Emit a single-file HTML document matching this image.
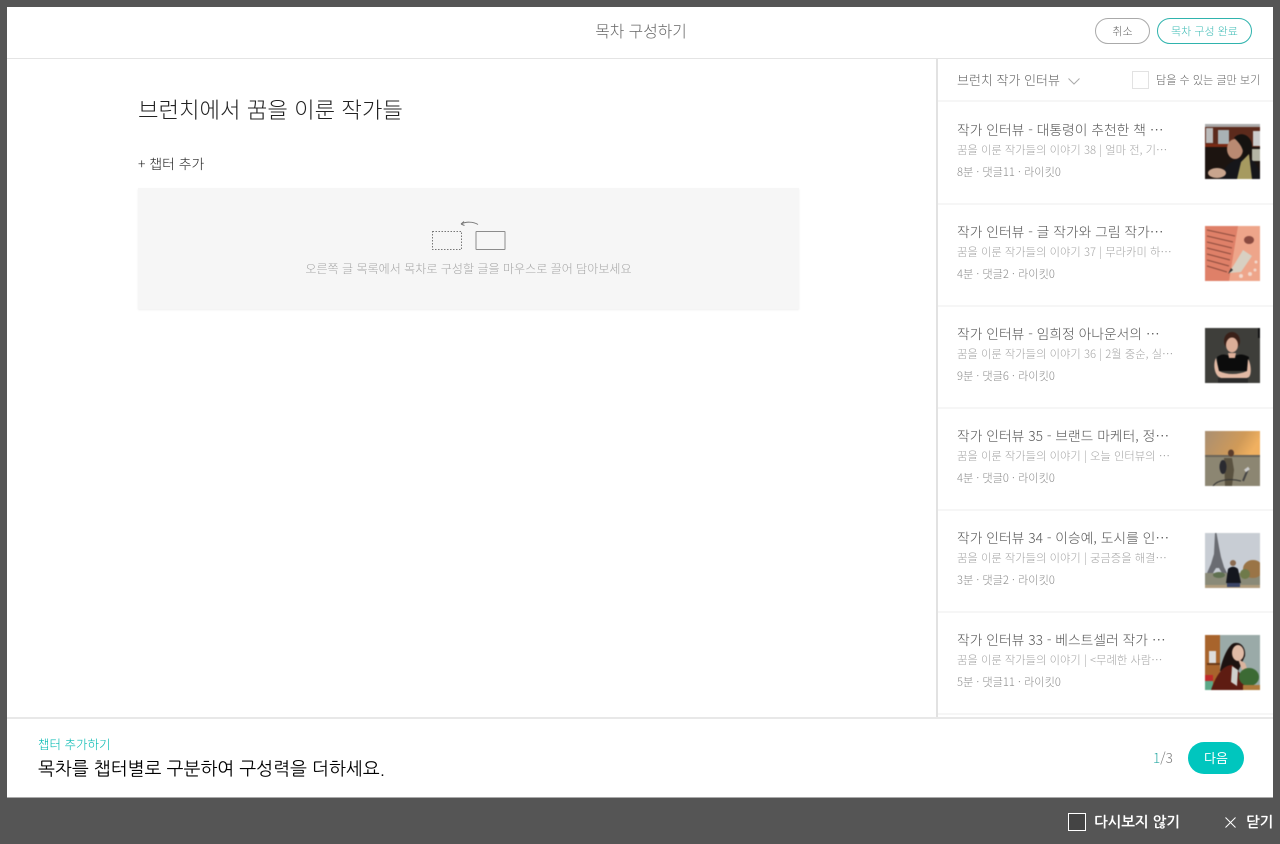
<!DOCTYPE html>
<html lang="ko"><head><meta charset="utf-8"><title>목차 구성하기</title>
<style>
html,body{margin:0;padding:0;width:1280px;height:844px;overflow:hidden;background:#555}
body{font-family:"Noto Sans CJK KR","Liberation Sans",sans-serif;font-weight:300;position:relative}
.a{position:absolute;white-space:nowrap;line-height:1}
#m{position:absolute;left:7px;top:7px;width:1266px;height:790px;background:#fff}
.t{left:957px;width:216px;overflow:hidden;font-size:13.8px;color:#555;line-height:20px}
.s{left:957px;width:216px;overflow:hidden;font-size:11.3px;color:#a5a5a5;line-height:16px}
.c{left:957px;font-size:11.2px;color:#8c8c8c;line-height:16px}
.l{left:938px;width:335px;height:2px;background:#f6f6f6}
svg.p{position:absolute;left:1205px;width:55px;height:55px;filter:blur(.6px)}
</style></head><body>
<div id="m"></div>
<div class="a" style="left:7px;top:58px;width:1266px;height:1px;background:#e4e4e4"></div>
<div class="a" style="left:936px;top:59px;width:2px;height:658px;background:#e2e2e2"></div>
<div class="a" style="left:7px;top:717px;width:1266px;height:2px;background:#e8e8e8"></div>
<div class="a" style="left:7px;top:797px;width:1266px;height:1px;background:#aaa"></div>

<div class="a" style="left:441px;width:400px;top:21px;text-align:center;font-size:15.8px;line-height:20px;color:#666">목차 구성하기</div>
<div class="a" style="left:1095px;top:18px;width:53px;height:24px;border:1px solid #aaa;border-radius:13px;text-align:center;font-size:11px;line-height:24px;color:#666">취소</div>
<div class="a" style="left:1157px;top:18px;width:93px;height:24px;border:1px solid #2fb3ad;border-radius:13px;text-align:center;font-size:11px;line-height:24px;color:#3fbcb6">목차 구성 완료</div>

<div class="a" style="left:138px;top:94px;font-size:22.3px;line-height:30px;color:#222">브런치에서 꿈을 이룬 작가들</div>
<div class="a" style="left:138px;top:154px;font-size:13.9px;line-height:20px;color:#222">+ 챕터 추가</div>
<div class="a" style="left:138px;top:188px;width:661px;height:121px;background:#f6f6f6;box-shadow:0 1px 2px rgba(0,0,0,.07)"></div>
<svg class="a" style="left:428px;top:216px" width="82" height="38" viewBox="0 0 82 38" fill="none">
<rect x="4.500" y="15.500" width="29" height="18" stroke="#777" stroke-dasharray="1.500 1.500"/>
<rect x="48" y="15.500" width="29" height="18" stroke="#8c8c8c" rx=".5"/>
<path d="M50 8.500C45 5.500 38 5.500 33 8M33 8l3-2.500M33 8l3.500 1.500" stroke="#777"/>
</svg>
<div class="a" style="left:138px;top:260px;width:661px;text-align:center;font-size:12.05px;line-height:18px;color:#a5a5a5">오른쪽 글 목록에서 목차로 구성할 글을 마우스로 끌어 담아보세요</div>

<div class="a" style="left:957px;top:71px;font-size:13px;line-height:18px;color:#666">브런치 작가 인터뷰</div>
<svg class="a" style="left:1067px;top:76px" width="14" height="10" fill="none"><path d="M1.500 2.500l5.500 5.500 5.500-5.500" stroke="#aaa"/></svg>
<div class="a" style="left:1132px;top:71px;width:15px;height:16px;border:1px solid #e2e2e2;background:#fff"></div>
<div class="a" style="left:1156px;top:71px;font-size:11.1px;line-height:18px;color:#666">담을 수 있는 글만 보기</div>
<div class="a l" style="top:100px"></div>

<div class="a t" style="top:119px">작가 인터뷰 - 대통령이 추천한 책 …</div>
<div class="a s" style="top:142px">꿈을 이룬 작가들의 이야기 38 | 얼마 전, 기…</div>
<div class="a c" style="top:164px">8분 · 댓글11 · 라이킷0</div>
<svg class="a p" style="top:124px" viewBox="0 0 55 55"><rect width="55" height="55" fill="#1c1410"/><rect width="55" height="3" fill="#aaa"/><rect x="0" y="3" width="55" height="20" fill="#5c2a1c"/><rect x="1" y="4" width="7" height="15" fill="#bbb"/><rect x="13" y="6" width="11" height="14" fill="#a9b2b5"/><rect x="48" y="7" width="7" height="15" fill="#ccc"/><rect x="0" y="20" width="30" height="3" fill="#7a2a14"/><rect x="47" y="25" width="8" height="12" fill="#b5b5a5"/><path d="M15 55C18 42 28 35 38 34S55 42 55 55z" fill="#16161a"/><ellipse cx="30" cy="25" rx="8" ry="10" fill="#b98a72"/><path d="M29 14C36 6 47 12 47 22S42 34 38 36C40 27 36 20 29 14z" fill="#151210"/><path d="M32 55L36 38 44 30 47 55z" fill="#a69a60"/><ellipse cx="12" cy="49" rx="9" ry="5" fill="#c9a58e"/></svg>
<div class="a l" style="top:203px"></div>

<div class="a t" style="top:221px">작가 인터뷰 - 글 작가와 그림 작가…</div>
<div class="a s" style="top:244px">꿈을 이룬 작가들의 이야기 37 | 무라카미 하…</div>
<div class="a c" style="top:266px">4분 · 댓글2 · 라이킷0</div>
<svg class="a p" style="top:226px" viewBox="0 0 55 55"><rect width="55" height="55" fill="#eea58a"/><path d="M0 0H33L24 55H0z" fill="#df8068"/><g stroke="#8a4a3c" stroke-width="1"><path d="M2 4L30 10M2 10L28 16M2 16L27 22M2 22L26 28M2 28L25 34M2 34L24 40M2 40L22 46"/></g><path d="M24 47L38 24 47 30 36 46z" fill="#d8d0c2"/><path d="M23 48l3-6 2 2z" fill="#333"/><ellipse cx="44" cy="14" rx="5" ry="4" fill="#8a4a40"/><g fill="#f2d8cc"><circle cx="36" cy="50" r="2"/><circle cx="45" cy="48" r="2"/><circle cx="51" cy="36" r="1.500"/><circle cx="50" cy="44" r="1.500"/></g></svg>
<div class="a l" style="top:305px"></div>

<div class="a t" style="top:323px">작가 인터뷰 - 임희정 아나운서의 …</div>
<div class="a s" style="top:346px">꿈을 이룬 작가들의 이야기 36 | 2월 중순, 실…</div>
<div class="a c" style="top:368px">9분 · 댓글6 · 라이킷0</div>
<svg class="a p" style="top:328px" viewBox="0 0 55 55"><rect width="55" height="55" fill="#3e3e3a"/><rect x="53" width="2" height="10" fill="#111"/><ellipse cx="27" cy="13" rx="8" ry="9" fill="#3a2018"/><ellipse cx="27" cy="17" rx="6" ry="7.500" fill="#dcae98"/><path d="M12 29C17 25 22 26 27 30 32 26 37 25 44 29L43 43H13z" fill="#0c0c0c"/><path d="M23 25h8l-1 5h-6z" fill="#dcae98"/><path d="M11 30c-3 5-2 16 3 19 8 4 22 4 30 0 3-3 2-14-1-18l-1 12c-9 4-20 4-28 0z" fill="#e2b9a4"/><rect x="13" y="50" width="30" height="5" fill="#2a2a2a"/></svg>
<div class="a l" style="top:407px"></div>

<div class="a t" style="top:425px">작가 인터뷰 35 - 브랜드 마케터, 정…</div>
<div class="a s" style="top:448px">꿈을 이룬 작가들의 이야기 | 오늘 인터뷰의 …</div>
<div class="a c" style="top:470px">4분 · 댓글0 · 라이킷0</div>
<svg class="a p" style="top:431px" viewBox="0 0 55 55"><defs><linearGradient id="g1" x1="0" x2="1" y1="0" y2=".3"><stop offset="0" stop-color="#a98f72"/><stop offset=".7" stop-color="#d09a58"/><stop offset="1" stop-color="#f0b060"/></linearGradient></defs><rect width="55" height="26" fill="url(#g1)"/><rect y="25" width="55" height="30" fill="#8c8672"/><rect y="24" width="55" height="2" fill="#6a6458"/><ellipse cx="26" cy="22" rx="3" ry="3.500" fill="#5a3c2c"/><path d="M19 27h8l2 12-2 16h-7z" fill="#5a5240"/><ellipse cx="18" cy="36" rx="3.500" ry="7" fill="#2a2a30"/><path d="M8 55C12 49 25 47 36 50" stroke="#333" fill="none"/><path d="M38 50L43 38" stroke="#444" stroke-width="2"/><path d="M40 40l4-3" stroke="#ccc" stroke-width="3"/></svg>
<div class="a l" style="top:509px"></div>

<div class="a t" style="top:527px">작가 인터뷰 34 - 이승예, 도시를 인…</div>
<div class="a s" style="top:550px">꿈을 이룬 작가들의 이야기 | 궁금증을 해결…</div>
<div class="a c" style="top:572px">3분 · 댓글2 · 라이킷0</div>
<svg class="a p" style="top:533px" viewBox="0 0 55 55"><rect width="55" height="55" fill="#c8cdd4"/><path d="M10 0h1.500L14 14l2 10 3 10 3 6h-5l-3-5h-3l-3 5H2l4-9 3-10z" fill="#6a6c72"/><rect x="0" y="40" width="55" height="13" fill="#8a8a78"/><rect x="0" y="52" width="55" height="3" fill="#b09c7c"/><ellipse cx="48" cy="36" rx="10" ry="9" fill="#9a7446"/><ellipse cx="40" cy="41" rx="5" ry="5" fill="#6f7a4a"/><ellipse cx="14" cy="42" rx="6" ry="3" fill="#5f7050"/><circle cx="28" cy="30" r="3" fill="#8a6a50"/><path d="M21 50L23 36c3-3 7-3 10 0l3 14z" fill="#14161e"/><path d="M22 50h13v4H22z" fill="#3a4466"/></svg>
<div class="a l" style="top:611px"></div>

<div class="a t" style="top:629px">작가 인터뷰 33 - 베스트셀러 작가 …</div>
<div class="a s" style="top:652px">꿈을 이룬 작가들의 이야기 | &lt;무례한 사람…</div>
<div class="a c" style="top:674px">5분 · 댓글11 · 라이킷0</div>
<svg class="a p" style="top:635px" viewBox="0 0 55 55"><rect width="55" height="55" fill="#9aaaa8"/><rect width="15" height="55" fill="#a8642c"/><rect x="4" y="16" width="7" height="12" fill="#ddd"/><rect x="2" y="28" width="13" height="2" fill="#6a3a18"/><rect x="0" y="40" width="8" height="15" fill="#5ca888"/><rect x="0" y="40" width="8" height="6" fill="#c02a2a"/><path d="M15 36C17 24 24 8 30 8c7-1 11 6 10 13l-9 20z" fill="#1c1210"/><ellipse cx="33" cy="18" rx="6" ry="8" fill="#e0bba6"/><path d="M6 55C12 38 19 30 27 30c5 4 8 8 10 12 4-2 6 4 10 9v4z" fill="#5e1c12"/><path d="M27 31l6 4-1 16-6-4z" fill="#d0d0cc"/><path d="M33 24l7 4 3 8-6-1z" fill="#dbb49e"/><ellipse cx="44" cy="42" rx="10" ry="9" fill="#3c6a34"/><rect x="38" y="50" width="17" height="5" fill="#b07a3c"/></svg>
<div class="a l" style="top:713px"></div>

<div class="a" style="left:38px;top:736px;font-size:12.5px;line-height:16px;color:#00b8b0">챕터 추가하기</div>
<div class="a" style="left:38px;top:758px;font-family:'NanumGothic','Noto Sans CJK KR',sans-serif;font-weight:400;font-size:18px;line-height:22px;color:#000">목차를 챕터별로 구분하여 구성력을 더하세요.</div>
<div class="a" style="left:1153px;top:749px;font-size:13.5px;line-height:16px;color:#2aa9a5">1<span style="color:#777">/3</span></div>
<div class="a" style="left:1188px;top:742px;width:56px;height:32px;border-radius:16px;background:#00c6be;color:#fff;text-align:center;font-weight:400;font-size:13px;line-height:31px">다음</div>

<div class="a" style="left:1068px;top:813px;width:16px;height:16px;border:1px solid #fff;background:#444"></div>
<div class="a" style="left:1094px;top:814px;font-family:'NanumGothic',sans-serif;font-weight:700;font-size:14.5px;line-height:18px;color:#fff">다시보지 않기</div>
<svg class="a" style="left:1224px;top:816px" width="13" height="13" fill="none"><path d="M1.500 1.500l10 10M11.500 1.500l-10 10" stroke="#fff"/></svg>
<div class="a" style="left:1246px;top:814px;font-family:'NanumGothic',sans-serif;font-weight:700;font-size:14.5px;line-height:18px;color:#fff">닫기</div>
</body></html>
